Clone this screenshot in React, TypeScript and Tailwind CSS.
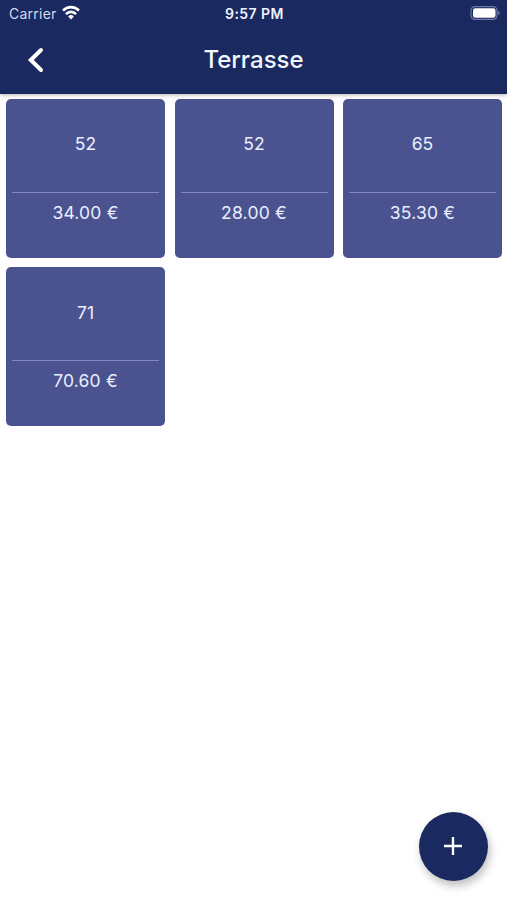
import React from "react";

interface Order {
  id: number;
  table: string;
  total: string;
}

const orders: Order[] = [
  { id: 1, table: "52", total: "34.00 €" },
  { id: 2, table: "52", total: "28.00 €" },
  { id: 3, table: "65", total: "35.30 €" },
  { id: 4, table: "71", total: "70.60 €" },
];

const StatusBar: React.FC = () => (
  <div className="grid grid-cols-3 items-center h-[27px] pl-[9px] pr-[7px]">
    <div className="flex items-center gap-[5px]">
      <span className="text-[14px] leading-none tracking-[0.25px] text-[#d3daf0]">Carrier</span>
      <svg className="w-[18px] h-[15px] -mt-[2px]" viewBox="0 0 18 14" preserveAspectRatio="none" fill="none" stroke="#fff">
        <path d="M1 5.2a11.6 11.6 0 0 1 16 0" strokeWidth="2.6" />
        <path d="M3.9 8.5a7.3 7.3 0 0 1 10.2 0" strokeWidth="2.4" />
        <path d="M9 13.6 6.1 10.8a4.2 4.2 0 0 1 5.8 0z" fill="#fff" stroke="none" />
      </svg>
    </div>
    <span className="pt-[1px] text-center text-[14px] leading-none font-semibold tracking-[0.45px] whitespace-nowrap text-[#eef3ff]">
      9:57 PM
    </span>
    <svg className="justify-self-end w-[30px] h-[14px] -mt-px" viewBox="0 0 30 14">
      <rect x="1" y="0.6" width="26" height="12.8" rx="4" fill="none" stroke="#7079a6" strokeWidth="1.2" />
      <rect x="3" y="2.2" width="22.5" height="9.6" rx="2.4" fill="#fff" />
      <path d="M28.2 4.7q1.6 0.6 1.6 2.3t-1.6 2.3z" fill="#7079a6" />
    </svg>
  </div>
);

const Header: React.FC = () => (
  <header className="relative z-10 h-[93.5px] bg-[#1a295f] shadow-[0_1px_4px_rgba(0,0,0,0.3)]">
    <StatusBar />
    <div className="grid grid-cols-[70px_1fr_70px] items-center h-[66px]">
      <button className="justify-self-end mr-[25px]" aria-label="Back">
        <svg className="w-[20px] h-[28px]" viewBox="0 0 20 28" fill="none" stroke="#fff" strokeWidth="4" strokeLinecap="round">
          <path d="M16 4 5.8 14 16 24" />
        </svg>
      </button>
      <h1 className="text-center text-[24px] leading-none font-medium text-[#f2f7ff]">Terrasse</h1>
    </div>
  </header>
);

const OrderCard: React.FC<{ order: Order }> = ({ order }) => (
  <div className="h-[159px] px-[6px] rounded-[5px] bg-[#4a528f] text-[#e9efff] text-[17.5px] leading-[24px] text-center">
    <div className="flex items-center justify-center h-[93px] pb-[2px]">{order.table}</div>
    <div className="border-t border-[#8087bd] pt-[8px] tracking-[0.2px]">{order.total}</div>
  </div>
);

const App: React.FC = () => {
  return (
    <div className="relative h-[900px] bg-white font-['Inter','Liberation_Sans',sans-serif]">
      <Header />

      <main className="grid grid-cols-3 gap-x-[9.5px] gap-y-[9.5px] pt-[5px] pl-[6px] pr-[5px]">
        {orders.map((order) => (
          <OrderCard key={order.id} order={order} />
        ))}
      </main>

      {/* Add button */}
      <button
        aria-label="Add"
        className="absolute right-[19.5px] bottom-[19.5px] flex items-center justify-center w-[68.5px] h-[68.5px] rounded-full bg-[#1a295f] shadow-[2px_5px_9px_rgba(0,0,0,0.25)]"
      >
        <svg className="w-[18px] h-[18px]" viewBox="0 0 18 18" stroke="#fff" strokeWidth="2.4">
          <path d="M9 0v18M0 9h18" />
        </svg>
      </button>
    </div>
  );
};

export default App;
